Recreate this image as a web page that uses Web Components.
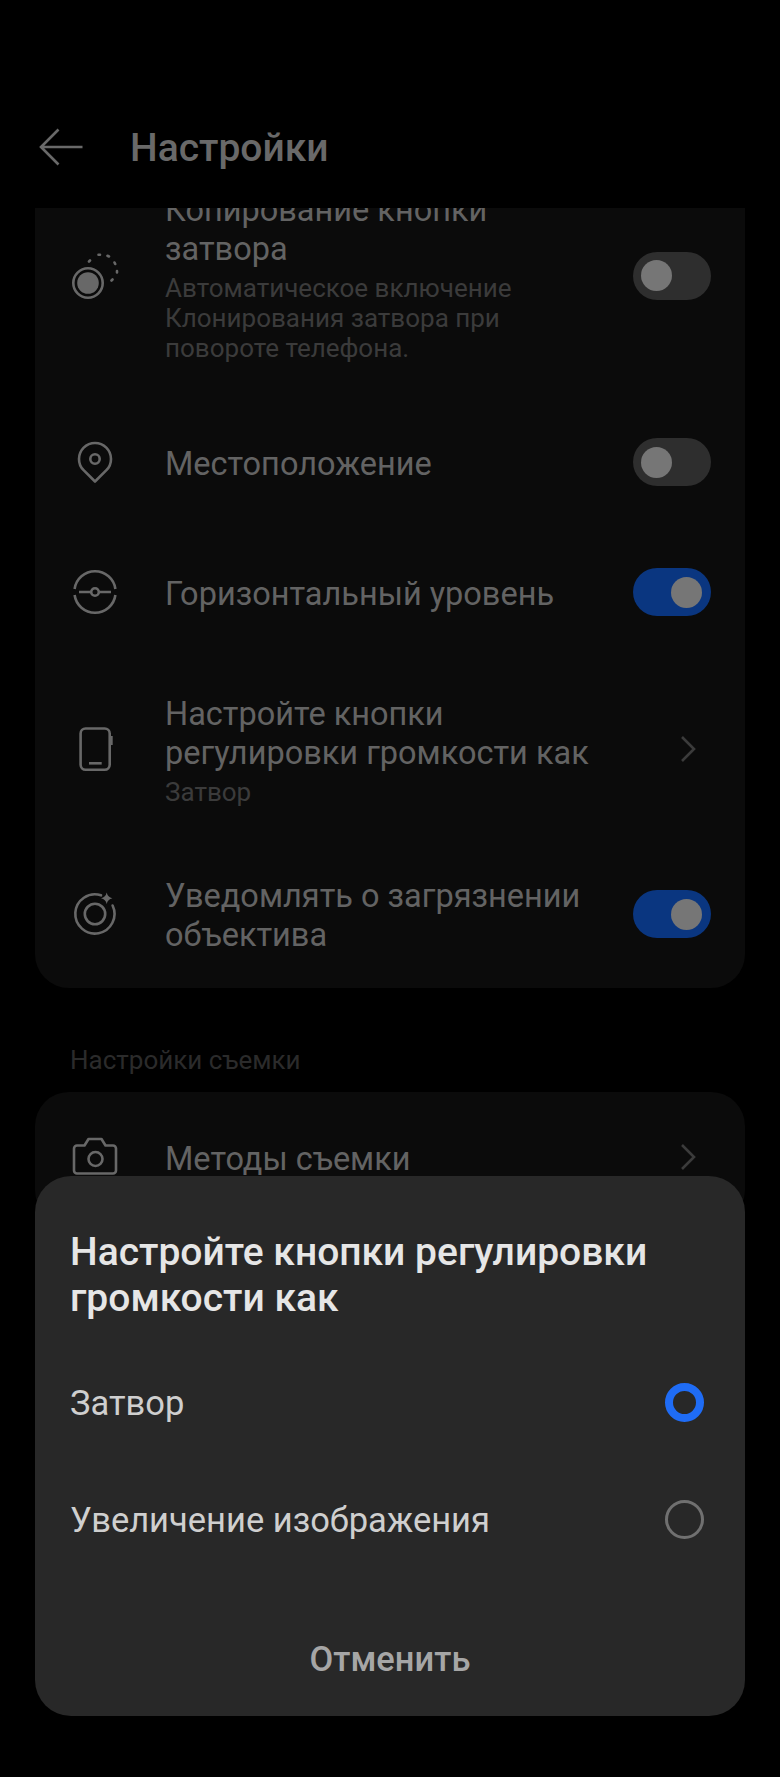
<!DOCTYPE html>
<html lang="ru">
<head>
<meta charset="utf-8">
<title>Настройки</title>
<style>
    html, body { margin: 0; background: #000; }
    body { height: 1777px; overflow: hidden; position: relative; font-family: Roboto, "Noto Sans", sans-serif; }
    .list { display: block; height: 1569px; overflow: hidden; }
    .scrolled { margin-top: -53px; }
    .second { padding-top: 2px; }
</style>
</head>
<body>
<settings-header>Настройки</settings-header>
<div class="list">
    <settings-card class="scrolled">
        <settings-row has-sub style="--lift: 6px">
            <setting-icon slot="icon" name="clone"></setting-icon>
            Копирование кнопки затвора
            <span slot="sub">Автоматическое включение Клонирования затвора при повороте телефона.</span>
            <toggle-switch slot="control"></toggle-switch>
        </settings-row>
        <settings-row>
            <setting-icon slot="icon" name="pin"></setting-icon>
            Местоположение
            <toggle-switch slot="control"></toggle-switch>
        </settings-row>
        <settings-row>
            <setting-icon slot="icon" name="level"></setting-icon>
            Горизонтальный уровень
            <toggle-switch slot="control" on></toggle-switch>
        </settings-row>
        <settings-row has-sub style="--lift: 7px; padding-bottom: 34px">
            <setting-icon slot="icon" name="phone"></setting-icon>
            Настройте кнопки регулировки громкости как
            <span slot="sub">Затвор</span>
            <row-chevron slot="control"></row-chevron>
        </settings-row>
        <settings-row>
            <setting-icon slot="icon" name="lens"></setting-icon>
            Уведомлять о загрязнении объектива
            <toggle-switch slot="control" on></toggle-switch>
        </settings-row>
    </settings-card>
    <section-label>Настройки съемки</section-label>
    <settings-card class="second">
        <settings-row>
            <setting-icon slot="icon" name="camera"></setting-icon>
            Методы съемки
            <row-chevron slot="control"></row-chevron>
        </settings-row>
    </settings-card>
</div>
<bottom-dialog>
    <span slot="title">Настройте кнопки регулировки громкости как</span>
    <dialog-option checked>Затвор</dialog-option>
    <dialog-option>Увеличение изображения</dialog-option>
    <span slot="action">Отменить</span>
</bottom-dialog>

<script>
const ICONS = {
    clone: `<circle cx="17" cy="31" r="14.7" stroke-width="2.6"/>
            <circle cx="17" cy="31" r="10.8" fill="currentColor" stroke="none"/>
            <path d="M18 9.5 L19 8.5 M27.5 2.8 L29 2.8 M36.5 3.8 L38 4.5 M43.5 10.5 L44.2 12 M46 19 L46 20.5 M41.5 27.5 L40.5 28.5" stroke-width="2.6" stroke-linecap="round"/>`,
    pin: `<path d="M24 43.5 L12.6 32.2 A16 16 0 1 1 35.4 32.2 Z" stroke-width="2.6" stroke-linejoin="round"/>
          <circle cx="24" cy="21" r="4.7" stroke-width="2.6"/>`,
    level: `<path d="M3.6 21 A20.6 20.6 0 0 1 44.4 21" stroke-width="2.6"/>
            <path d="M3.6 27 A20.6 20.6 0 0 0 44.4 27" stroke-width="2.6"/>
            <path d="M8 24 H20 M28 24 H40" stroke-width="2.6"/>
            <circle cx="24" cy="24" r="3.8" stroke-width="2.6"/>`,
    phone: `<rect x="9.6" y="3.5" width="29.1" height="41.3" rx="5" stroke-width="2.6"/>
            <path d="M18 38.3 H30.7" stroke-width="2.6"/>
            <path d="M40.4 11 V20" stroke-width="2.6"/>`,
    lens: `<path d="M30 5.3 A19.6 19.6 0 1 0 41.6 15.5" stroke-width="2.6" stroke-linecap="round"/>
           <circle cx="24" cy="24" r="10.2" stroke-width="2.6"/>
           <path d="M35.7 2.5 Q36.7 7.2 41.4 8.2 Q36.7 9.2 35.7 13.9 Q34.7 9.2 30 8.2 Q34.7 7.2 35.7 2.5 Z" fill="currentColor" stroke="none"/>`,
    camera: `<path d="M6 12.5 H13.5 L17.5 6 H30.5 L34.5 12.5 H42 A3 3 0 0 1 45 15.5 V37.5 A3 3 0 0 1 42 40.5 H6 A3 3 0 0 1 3 37.5 V15.5 A3 3 0 0 1 6 12.5 Z" stroke-width="2.6" stroke-linejoin="round"/>
             <circle cx="24.5" cy="26" r="7" stroke-width="2.6"/>`
};

class SettingsHeader extends HTMLElement {
    constructor() {
        super();
        this.attachShadow({ mode: 'open' });
        this.shadowRoot.innerHTML = `
            <style>
                :host {
                    display: flex;
                    align-items: center;
                    box-sizing: border-box;
                    height: 208px;
                    padding: 88px 0 0 39px;
                    color: #696969;
                    font: 500 39px/120px Roboto, sans-serif;
                }
                svg { width: 44px; height: 38px; margin: -2px 47px 0 0; flex: none; }
            </style>
            <svg viewBox="0 0 44 38" fill="none" stroke="#696969" stroke-width="2.6">
                <path d="M19.5 1.5 L2 19 L19.5 36.5 M2 19 H43.5"/>
            </svg>
            <slot></slot>`;
    }
}

class SettingsCard extends HTMLElement {
    constructor() {
        super();
        this.attachShadow({ mode: 'open' });
        this.shadowRoot.innerHTML = `
            <style>
                :host {
                    display: block;
                    margin: 0 35px;
                    background: #0b0b0b;
                    border-radius: 34px;
                }
            </style>
            <slot></slot>`;
    }
}

class SettingsRow extends HTMLElement {
    constructor() {
        super();
        this.attachShadow({ mode: 'open' });
        this.shadowRoot.innerHTML = `
            <style>
                :host {
                    display: flex;
                    align-items: center;
                    box-sizing: border-box;
                    min-height: 130px;
                    padding: 33px 34px 33px 36px;
                    color: #636363;
                    font: 400 32.5px/39px Roboto, sans-serif;
                }
                :host([has-sub]) { padding-top: 36px; }
                .icon { flex: none; width: 48px; height: 48px; margin: 0 46px var(--lift, 4px) 0; }
                .text { flex: 1; min-width: 0; max-width: 432px; margin-right: auto; }
                .sub { color: #3b3b3b; font-size: 26px; line-height: 30px; }
                ::slotted([slot="sub"]) { display: block; margin: 4px 0 3px; }
                .control { flex: none; margin: 0 0 var(--lift, 4px) auto; }
            </style>
            <div class="icon"><slot name="icon"></slot></div>
            <div class="text">
                <slot></slot>
                <div class="sub"><slot name="sub"></slot></div>
            </div>
            <div class="control"><slot name="control"></slot></div>`;
    }
}

class SettingIcon extends HTMLElement {
    constructor() {
        super();
        this.attachShadow({ mode: 'open' });
    }

    connectedCallback() {
        this.shadowRoot.innerHTML = `
            <style>
                :host { display: block; width: 48px; height: 48px; color: #686868; }
                svg { display: block; width: 48px; height: 48px; overflow: visible; }
            </style>
            <svg viewBox="0 0 48 48" fill="none" stroke="currentColor">${ICONS[this.getAttribute('name')]}</svg>`;
    }
}

class ToggleSwitch extends HTMLElement {
    constructor() {
        super();
        this.attachShadow({ mode: 'open' });
        this.shadowRoot.innerHTML = `
            <style>
                :host {
                    display: flex;
                    align-items: center;
                    box-sizing: border-box;
                    width: 78px;
                    height: 48px;
                    padding: 0 9px 0 8px;
                    border-radius: 24px;
                    background: #2e2e2e;
                }
                :host([on]) { background: #0a3680; justify-content: flex-end; }
                i { display: block; width: 31px; height: 31px; border-radius: 50%; background: #767676; }
            </style>
            <i></i>`;
    }
}

class RowChevron extends HTMLElement {
    constructor() {
        super();
        this.attachShadow({ mode: 'open' });
        this.shadowRoot.innerHTML = `
            <style>
                :host { display: block; width: 78px; }
                svg { display: block; width: 16px; height: 28px; margin-left: 47px; }
            </style>
            <svg viewBox="0 0 16 28" fill="none" stroke="#3b3b3b" stroke-width="2.6">
                <path d="M2 2 L14 14 L2 26"/>
            </svg>`;
    }
}

class SectionLabel extends HTMLElement {
    constructor() {
        super();
        this.attachShadow({ mode: 'open' });
        this.shadowRoot.innerHTML = `
            <style>
                :host {
                    display: block;
                    padding: 57px 70px 17px;
                    color: #2b2b2b;
                    font: 400 26px/30px Roboto, sans-serif;
                }
            </style>
            <slot></slot>`;
    }
}

class BottomDialog extends HTMLElement {
    constructor() {
        super();
        this.attachShadow({ mode: 'open' });
        this.shadowRoot.innerHTML = `
            <style>
                :host {
                    position: absolute;
                    left: 35px;
                    top: 1176px;
                    display: flex;
                    flex-direction: column;
                    box-sizing: border-box;
                    width: 710px;
                    height: 540px;
                    padding: 53px 0 0;
                    background: #282828;
                    border-radius: 36px;
                }
                .title {
                    margin: 0 35px 23px;
                    color: #e6e6e6;
                    font: 500 39px/46px Roboto, sans-serif;
                }
                .action {
                    margin-top: 46px;
                    text-align: center;
                    color: #a6a6a6;
                    font: 500 34.5px/70px Roboto, sans-serif;
                }
            </style>
            <div class="title"><slot name="title"></slot></div>
            <slot></slot>
            <div class="action"><slot name="action"></slot></div>`;
    }
}

class DialogOption extends HTMLElement {
    constructor() {
        super();
        this.attachShadow({ mode: 'open' });
        this.shadowRoot.innerHTML = `
            <style>
                :host {
                    display: flex;
                    align-items: center;
                    justify-content: space-between;
                    height: 117px;
                    padding: 0 41px 0 35px;
                    color: #cfcfcf;
                    font: 400 34.5px/40px Roboto, sans-serif;
                }
                i {
                    display: block;
                    box-sizing: border-box;
                    width: 39px;
                    height: 39px;
                    border-radius: 50%;
                    border: 3px solid #707070;
                }
                :host([checked]) i { border: 8.5px solid #1f6cf5; }
            </style>
            <slot></slot>
            <i></i>`;
    }
}

customElements.define('settings-header', SettingsHeader);
customElements.define('settings-card', SettingsCard);
customElements.define('settings-row', SettingsRow);
customElements.define('setting-icon', SettingIcon);
customElements.define('toggle-switch', ToggleSwitch);
customElements.define('row-chevron', RowChevron);
customElements.define('section-label', SectionLabel);
customElements.define('bottom-dialog', BottomDialog);
customElements.define('dialog-option', DialogOption);
</script>
</body>
</html>
